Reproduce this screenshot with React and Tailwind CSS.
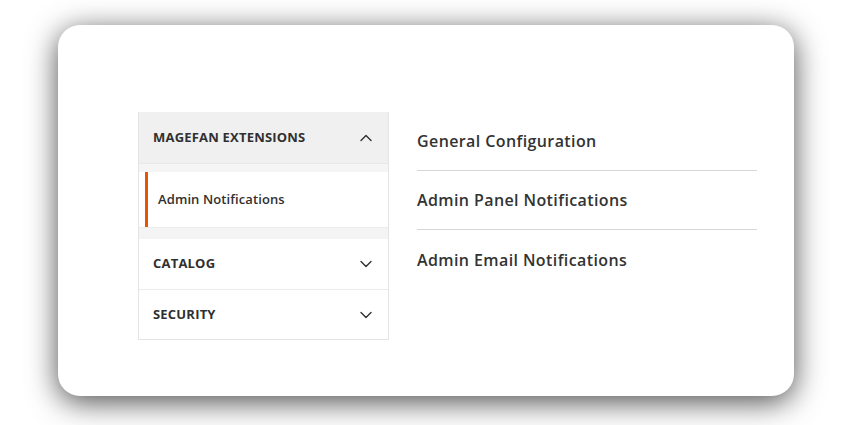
import React from "react";

const Chevron = ({ up }) => (
  <svg width="12" height="8" viewBox="0 0 12 8" fill="none" className="text-[#303030]">
    <path
      d={up ? "M1 6.5L6 1.5L11 6.5" : "M1 1.5L6 6.5L11 1.5"}
      stroke="currentColor"
      strokeWidth="1.4"
      strokeLinecap="round"
      strokeLinejoin="round"
    />
  </svg>
);

export default function App() {
  const font = { fontFamily: '"Open Sans", "Noto Sans", sans-serif' };
  return (
    <div className="w-[853px] h-[425px] bg-white overflow-hidden" style={font}>
      <div className="ml-[58px] mt-[25px] w-[736px] h-[371px] bg-white rounded-[22px] shadow-[0_6px_30px_rgba(0,0,0,0.7)] pl-[80px] pt-[87px] pr-[37px] flex">
        <div className="w-[251px] border-l border-r border-b border-[#e4e4e4] self-start">
          <div className="h-[52px] bg-[#f0f0f0] flex items-center justify-between pl-[14px] pr-[16px] border-b border-[#e8e8e8]">
            <span className="text-[13px] font-bold text-[#303030] uppercase tracking-[0.2px]">Magefan Extensions</span>
            <Chevron up />
          </div>
          <div className="h-[8px] bg-[#f5f5f5]" />
          <div className="bg-white pl-[6px]">
            <div className="h-[55px] border-l-[3px] border-[#eb5202] flex items-center pl-[10px]">
              <span className="text-[13px] font-semibold text-[#303030] tracking-[0.1px]">Admin Notifications</span>
            </div>
          </div>
          <div className="h-[12px] bg-[#f4f4f4] border-t border-[#ececec]" />
          <div className="h-[51px] flex items-center justify-between pl-[14px] pr-[16px] border-b border-[#ececec]">
            <span className="text-[13px] font-bold text-[#303030] uppercase tracking-[0.2px]">Catalog</span>
            <Chevron />
          </div>
          <div className="h-[49px] flex items-center justify-between pl-[14px] pr-[16px]">
            <span className="text-[13px] font-bold text-[#303030] uppercase tracking-[0.2px]">Security</span>
            <Chevron />
          </div>
        </div>
        <div className="flex-1 ml-[28px] flex flex-col">
          <div className="h-[59px] flex items-center border-b border-[#d6d6d6]">
            <span className="text-[16px] font-semibold text-[#333] tracking-[0.4px]">General Configuration</span>
          </div>
          <div className="h-[59px] flex items-center border-b border-[#d6d6d6]">
            <span className="text-[16px] font-semibold text-[#333] tracking-[0.4px]">Admin Panel Notifications</span>
          </div>
          <div className="h-[59px] flex items-center">
            <span className="text-[16px] font-semibold text-[#333] tracking-[0.4px]">Admin Email Notifications</span>
          </div>
        </div>
      </div>
    </div>
  );
}
